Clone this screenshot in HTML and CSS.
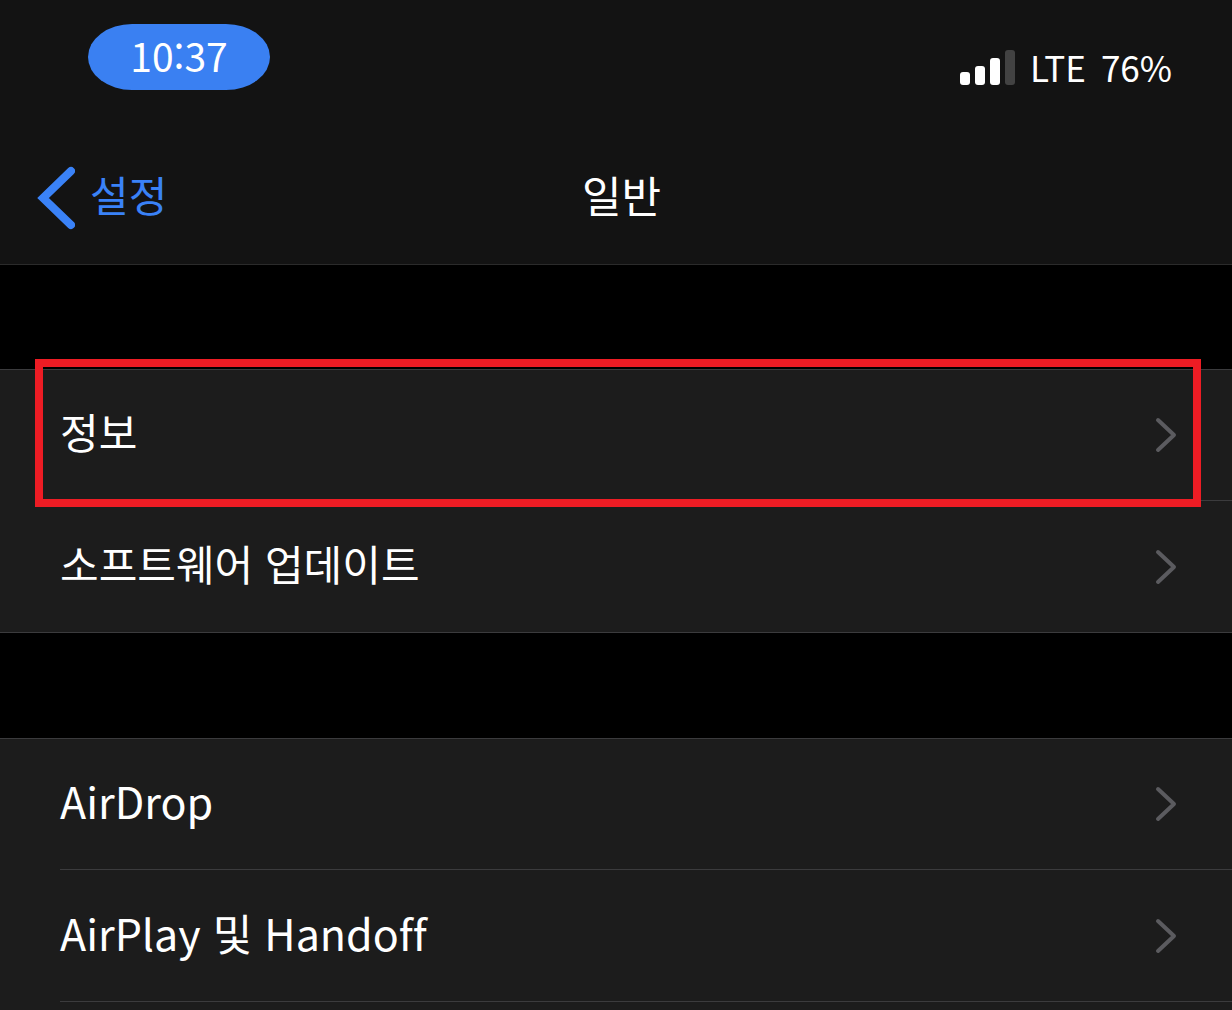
FILE: index.html
```html
<!DOCTYPE html>
<html lang="ko">
<head>
<meta charset="utf-8">
<meta name="viewport" content="width=device-width, initial-scale=1">
<title>일반</title>
<link rel="stylesheet" href="styles.css">
</head>
<body>
<header class="header">
  <div class="status">
    <button class="time" type="button">10:37</button>
    <div class="indicators">
      <svg class="signal" viewBox="0 0 55 35" aria-hidden="true">
        <rect x="0" y="22" width="10" height="13" rx="3" fill="#fff"/>
        <rect x="15" y="16" width="10" height="19" rx="3" fill="#fff"/>
        <rect x="30" y="8" width="10" height="27" rx="3" fill="#fff"/>
        <rect x="45" y="0" width="10" height="35" rx="3" fill="#424242"/>
      </svg>
      <span class="network">LTE</span>
      <span class="battery">76%</span>
    </div>
  </div>
  <nav class="navbar">
    <a class="back" href="#settings">
      <svg class="back-icon" viewBox="0 0 38 64" aria-hidden="true"><path d="M34 5 6 32l28 27"/></svg>
      <span class="label">설정</span>
    </a>
    <h1 class="title label">일반</h1>
  </nav>
</header>
<main class="content">
  <ul class="group">
    <li class="item highlighted"><a class="row" href="#about"><span class="label">정보</span><svg class="chevron" viewBox="0 0 22 36" aria-hidden="true"><path d="M3 3l16 15L3 33"/></svg></a></li>
    <li class="item"><a class="row" href="#update"><span class="label">소프트웨어 업데이트</span><svg class="chevron" viewBox="0 0 22 36" aria-hidden="true"><path d="M3 3l16 15L3 33"/></svg></a></li>
  </ul>
  <ul class="group open">
    <li class="item"><a class="row" href="#airdrop"><span class="label">AirDrop</span><svg class="chevron" viewBox="0 0 22 36" aria-hidden="true"><path d="M3 3l16 15L3 33"/></svg></a></li>
    <li class="item"><a class="row" href="#airplay"><span class="label">AirPlay 및 Handoff</span><svg class="chevron" viewBox="0 0 22 36" aria-hidden="true"><path d="M3 3l16 15L3 33"/></svg></a></li>
  </ul>
</main>
</body>
</html>
```
FILE: styles.css
```css
* {
  box-sizing: border-box;
}

body {
  margin: 0;
  min-height: 100vh;
  display: flex;
  flex-direction: column;
  background: #000;
  color: #fff;
  font-family: "Noto Sans CJK KR", "Noto Sans", sans-serif;
  font-size: 42px;
  font-variant-ligatures: none;
  line-height: 60px;
}

a {
  color: inherit;
  text-decoration: none;
}

.label {
  padding-bottom: 8px;
}

.header {
  background: #131313;
  border-bottom: 1px solid #2b2b2b;
}

.status {
  display: flex;
  justify-content: space-between;
  align-items: flex-start;
  padding: 24px 60px 0 88px;
}

.time {
  width: 182px;
  height: 66px;
  padding: 0 0 4px;
  border: 0;
  border-radius: 44px / 33px;
  background: #3a80f2;
  color: #fff;
  font: inherit;
  font-size: 39px;
  line-height: 62px;
}

.indicators {
  display: flex;
  align-items: center;
  gap: 15px;
  padding-top: 23px;
  font-size: 35px;
  line-height: 40px;
}

.signal {
  width: 55px;
  height: 35px;
}

.navbar {
  display: grid;
  grid-template-columns: 1fr auto 1fr;
  align-items: center;
  padding: 74px 26px 32px 37px;
}

.back {
  display: flex;
  align-items: center;
  gap: 15px;
  color: #3a82f7;
}

.back-icon {
  width: 38px;
  height: 64px;
  fill: none;
  stroke: #3a82f7;
  stroke-width: 8;
  stroke-linecap: round;
  stroke-linejoin: miter;
}

.title {
  margin: 0;
  font-size: 43px;
  font-weight: 400;
}

.content {
  flex: 1;
  display: flex;
  flex-direction: column;
  gap: 105px;
  padding-top: 104px;
}

.group {
  margin: 0;
  padding: 0;
  list-style: none;
  background: #1c1c1c;
  border-top: 1px solid #3b3b3d;
  border-bottom: 1px solid #3b3b3d;
}

.open {
  flex: 1;
  border-bottom: 0;
  font-size: 43px;
}

.item {
  position: relative;
}

.row {
  display: flex;
  align-items: center;
  justify-content: space-between;
  height: 131px;
  margin-left: 60px;
  padding-right: 55px;
  border-bottom: 1px solid #3b3b3d;
}

.item + .item .row {
  height: 132px;
}

.group:not(.open) .item:last-child .row {
  height: 131px;
  border-bottom: 0;
}

.chevron {
  width: 22px;
  height: 36px;
  fill: none;
  stroke: #5b5b5f;
  stroke-width: 4;
  stroke-linecap: round;
  stroke-linejoin: round;
}

/* Red frame drawn over the row that the guide points to */
.highlighted::after {
  content: "";
  position: absolute;
  inset: -11px 31px -6px 35px;
  border: 8px solid #ed1c24;
  z-index: 1;
  pointer-events: none;
}
```
